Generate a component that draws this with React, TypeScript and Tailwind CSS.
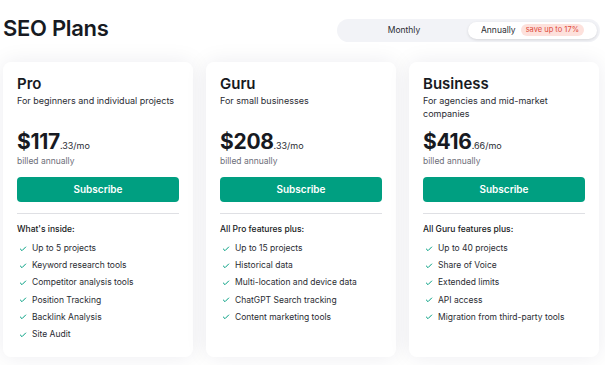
import React from "react";
import { Check } from "lucide-react";

type Plan = {
  name: string;
  desc: string;
  price: string;
  cents: string;
  heading: string;
  features: string[];
};

const plans: Plan[] = [
  {
    name: "Pro",
    desc: "For beginners and individual projects",
    price: "$117",
    cents: ".33/mo",
    heading: "What's inside:",
    features: [
      "Up to 5 projects",
      "Keyword research tools",
      "Competitor analysis tools",
      "Position Tracking",
      "Backlink Analysis",
      "Site Audit",
    ],
  },
  {
    name: "Guru",
    desc: "For small businesses",
    price: "$208",
    cents: ".33/mo",
    heading: "All Pro features plus:",
    features: [
      "Up to 15 projects",
      "Historical data",
      "Multi-location and device data",
      "ChatGPT Search tracking",
      "Content marketing tools",
    ],
  },
  {
    name: "Business",
    desc: "For agencies and mid-market companies",
    price: "$416",
    cents: ".66/mo",
    heading: "All Guru features plus:",
    features: [
      "Up to 40 projects",
      "Share of Voice",
      "Extended limits",
      "API access",
      "Migration from third-party tools",
    ],
  },
];

function PlanCard({ plan }: { plan: Plan }) {
  return (
    <div className="flex flex-col rounded-[8px] bg-white px-[14px] pt-[12px] h-[295px] shadow-[0_0_22px_rgba(20,30,60,0.08)]">
      <h2 className="text-[15px] leading-[20px] font-semibold text-[#171a22]">
        {plan.name}
      </h2>
      <p className="mt-[1px] min-h-[26px] text-[9px] leading-[12.5px] text-[#2a2c33]">
        {plan.desc}
      </p>
      <div className="mt-[8px] flex items-baseline text-[#171a22]">
        <span className="text-[21px] leading-[26px] font-bold tracking-[-0.3px]">
          {plan.price}
        </span>
        <span className="text-[9px] leading-[12px] text-[#2a2c33]">
          {plan.cents}
        </span>
      </div>
      <p className="text-[8.5px] leading-[12px] text-[#6c6e79]">billed annually</p>
      <button className="mt-[10px] h-[25px] w-full rounded-[4px] bg-[#009f81] text-[10px] font-semibold text-white">
        Subscribe
      </button>
      <div className="mt-[11px] h-px bg-[#dfe0e4]" />
      <p className="mt-[9px] text-[8.5px] leading-[12px] font-medium text-[#171a22]">
        {plan.heading}
      </p>
      <ul className="mt-[5px] flex flex-col">
        {plan.features.map((f) => (
          <li
            key={f}
            className="flex items-center gap-[5px] text-[8.5px] leading-[17.2px] text-[#2a2c33]"
          >
            <Check size={8} strokeWidth={3} className="ml-[2px] text-[#009f81]" />
            {f}
          </li>
        ))}
      </ul>
    </div>
  );
}

export default function App() {
  return (
    <div
      className="w-[605px] h-[365px] bg-white pl-[3px] pr-[6px] pt-[14px]"
      style={{ fontFamily: "Inter, 'Noto Sans', sans-serif" }}
    >
      <div className="flex items-center justify-between mr-[-1px]">
        <h1 className="text-[22px] leading-[28px] font-semibold tracking-[-0.3px] text-[#171a22]">
          SEO Plans
        </h1>
        <div className="flex h-[23px] w-[263px] items-center rounded-full bg-[#f2f3f7] p-[3px] mt-[4px]">
          <div className="flex-1 text-center text-[8.5px] text-[#2a2c33]">
            Monthly
          </div>
          <div className="flex h-[17px] w-[129px] items-center justify-center gap-[5px] rounded-full bg-white shadow-[0_1px_3px_rgba(0,0,0,0.12)]">
            <span className="text-[8.5px] text-[#2a2c33]">Annually</span>
            <span className="rounded-full bg-[#fde1dc] px-[5px] text-[7.5px] leading-[12px] text-[#e04a3a]">
              save up to 17%
            </span>
          </div>
        </div>
      </div>
      <div className="mt-[20px] grid grid-cols-3 gap-[13px]">
        {plans.map((p) => (
          <PlanCard key={p.name} plan={p} />
        ))}
      </div>
    </div>
  );
}
